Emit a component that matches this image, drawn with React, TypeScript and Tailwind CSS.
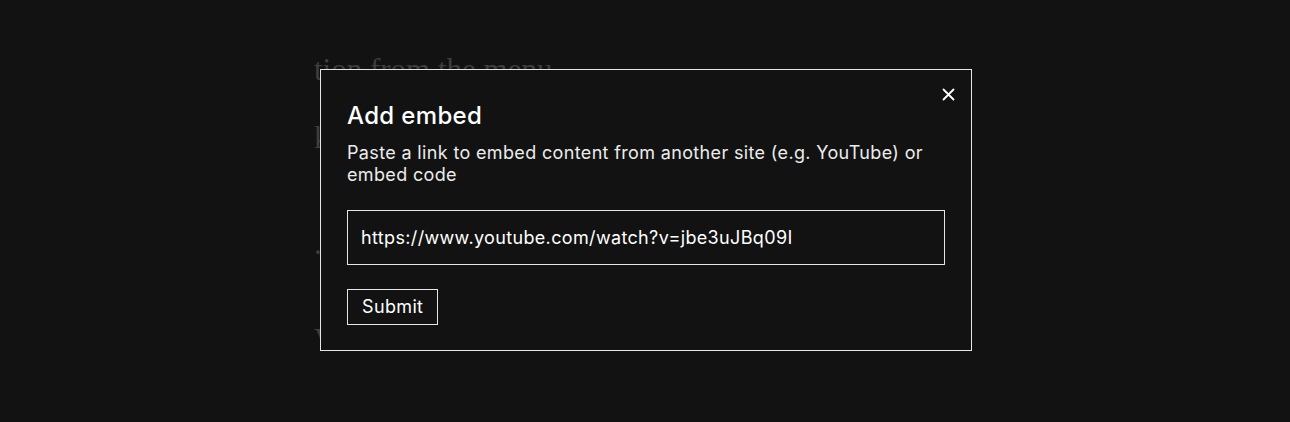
import { useState } from "react";

const EmbedModal = () => {
    const [url, setUrl] = useState<string>("https://www.youtube.com/watch?v=jbe3uJBq09I")

    return (
        <div className="absolute left-[320px] top-[69px] w-[652px] border border-[#e6e6e6] bg-[#121212] px-[26px] pt-[30px] pb-[25px] font-['Inter',sans-serif] tracking-[0.35px]">
            {/* Close btn */}
            <button className="absolute right-[16px] top-[17px] flex h-[14px] w-[14px] items-center justify-center text-white">
                <svg width="13" height="13" viewBox="0 0 13 13" fill="none" stroke="currentColor" strokeWidth="1.8" strokeLinecap="round">
                    <path d="M1.5 1.5 L11.5 11.5 M11.5 1.5 L1.5 11.5" />
                </svg>
            </button>

            <h2 className="text-[24px] leading-[32px] font-medium text-white">Add embed</h2>
            <p className="mt-[10px] text-[18px] leading-[22px] text-[#ececec]">
                Paste a link to embed content from another site (e.g. YouTube) or embed code
            </p>

            <input
                autoFocus
                className="mt-[24px] block h-[55px] w-full border border-[#e6e6e6] bg-transparent pl-[13px] pr-[14px] text-[18px] text-white caret-white outline-none"
                value={url}
                onChange={(e) => {
                    setUrl(e.target.value)
                }}
            />

            <button className="mt-[24px] block h-[36px] border border-[#e6e6e6] px-[14px] text-[18px] leading-[34px] text-white">
                Submit
            </button>
        </div>
    )
}

export default function App() {
    return (
        <div className="relative h-[422px] w-full overflow-hidden bg-[#121212]">
            {/* Editor content behind the modal */}
            <div className="pl-[314px] pt-[52px] font-['Liberation_Serif',serif] text-[31px] text-[#3e3e3e]">
                <p className="leading-[36px]">tion from the menu</p>
                <p className="mt-[32px] leading-[36px]">k</p>
                <p className="mt-[70px] leading-[36px]">.</p>
                <p className="mt-[60px] leading-[36px]">V</p>
            </div>

            <EmbedModal />
        </div>
    )
}
